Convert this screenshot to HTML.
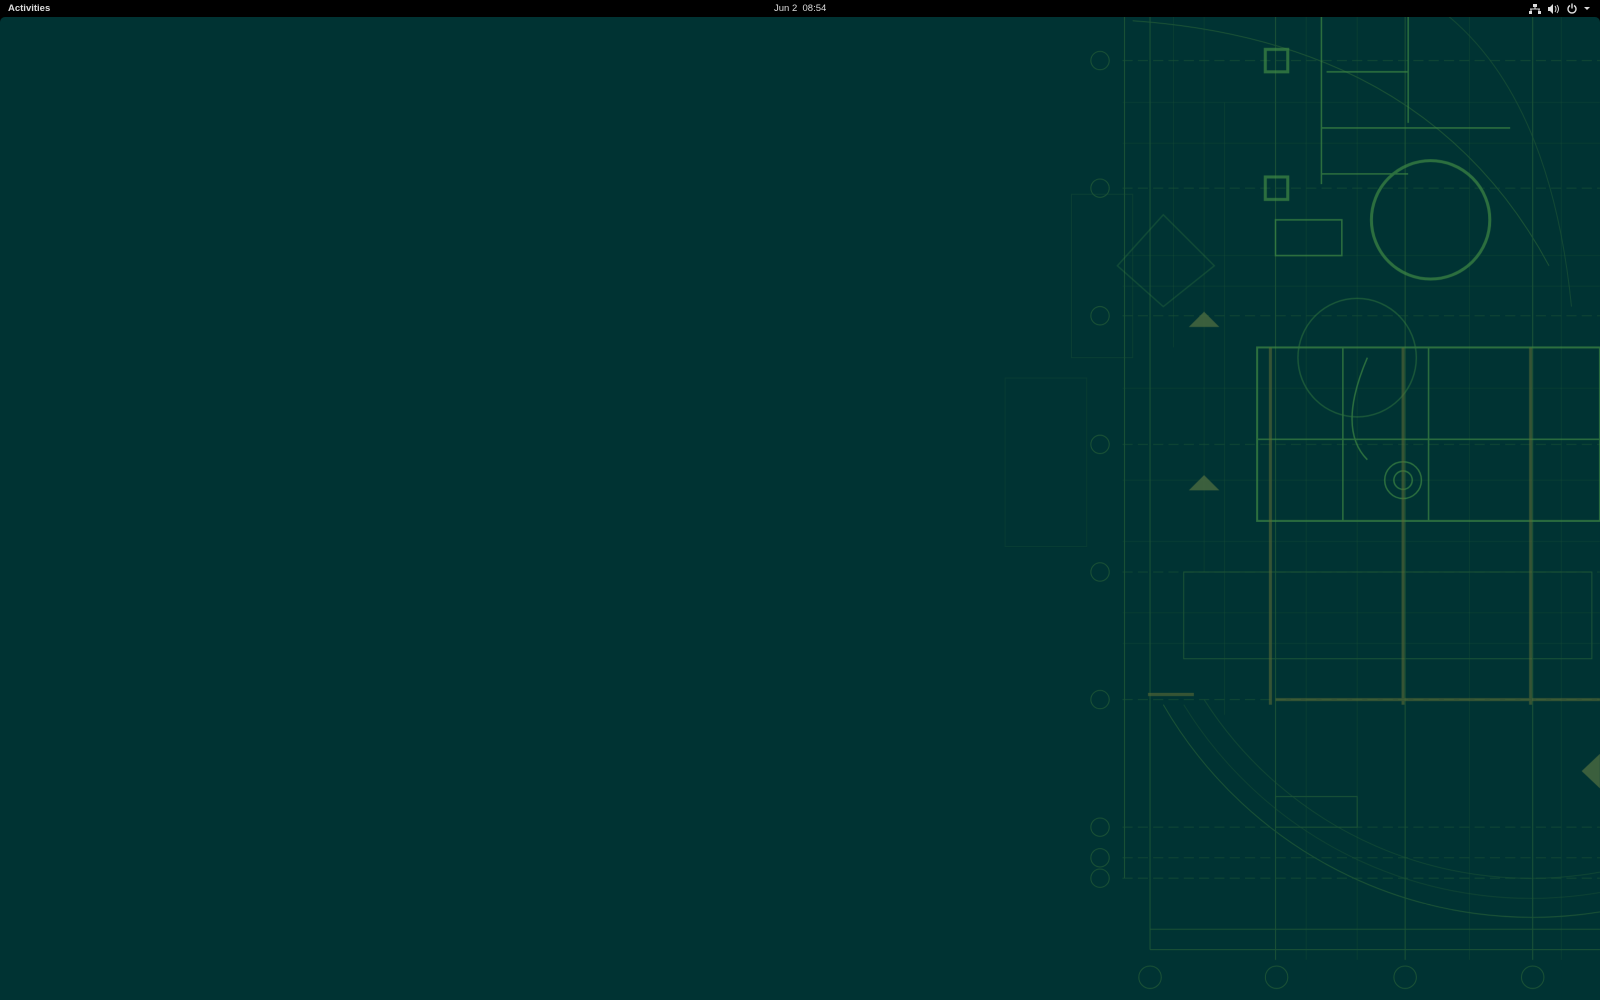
<!DOCTYPE html>
<html><head><style>
html,body{margin:0;padding:0;width:1600px;height:1000px;overflow:hidden;background:#000;}
#bar{position:absolute;left:0;top:0;width:1600px;height:17px;background:#000;color:#ddd;font-family:"Liberation Sans",sans-serif;font-size:9.5px;}
#desk{position:absolute;left:0;top:17px;width:1600px;height:983px;background:#003333;border-radius:5px 5px 0 0;overflow:hidden;}
svg{position:absolute;left:0;top:0;}
</style></head><body>
<div id="bar">
<span style="position:absolute;left:8px;top:3px;font-weight:bold;">Activities</span>
<span style="position:absolute;left:774px;top:3px;">Jun 2&nbsp; 08:54</span>
<svg width="1600" height="17" style="left:0;top:0">
<g fill="#ddd" stroke="#ddd">
<rect x="1533" y="4" width="4" height="3" stroke="none"/>
<path d="M1535 7v2M1530 9h10M1531 9v2M1539 9v2" fill="none" stroke-width="1"/>
<rect x="1529" y="11" width="3" height="3" stroke="none"/><rect x="1538" y="11" width="3" height="3" stroke="none"/>
<path d="M1548 7h2l3-3v10l-3-3h-2z" stroke="none"/>
<path d="M1555 6q2 3 0 6M1557 5q3 4 0 8" fill="none" stroke-width="1"/>
<path d="M1570 5.5a4 4 0 1 0 4 0" fill="none" stroke-width="1.4"/>
<path d="M1572 3.5v5" stroke-width="1.4"/>
<path d="M1584 7h6l-3 3z" stroke="none"/>
</g></svg>
</div>
<div id="desk">
<svg width="1600" height="983" viewBox="0 16.3 1568 963" preserveAspectRatio="none">
<g fill="none" stroke="#2f6a3a" stroke-width="1" opacity="0.6">
<path d="M1102 16V860M1127 16V930M1250 16V940M1377 16V940M1502 16V940"/>
<path d="M1100 59H1568M1100 184H1568M1100 309H1568M1100 435H1568M1100 560H1568M1100 685H1568M1100 810H1568M1100 840H1568M1100 860H1568" stroke-dasharray="10 5" opacity="0.6"/>
<path d="M1127 910H1568M1127 930H1568"/>
<circle cx="1078" cy="59" r="9"/><circle cx="1078" cy="184" r="9"/><circle cx="1078" cy="309" r="9"/><circle cx="1078" cy="435" r="9"/><circle cx="1078" cy="560" r="9"/><circle cx="1078" cy="685" r="9"/><circle cx="1078" cy="810" r="9"/><circle cx="1078" cy="840" r="9"/><circle cx="1078" cy="860" r="9"/>
<circle cx="1127" cy="957" r="11"/><circle cx="1251" cy="957" r="11"/><circle cx="1377" cy="957" r="11"/><circle cx="1502" cy="957" r="11"/>
<path d="M1140 690A418 418 0 0 0 1568 893"/>
<path d="M1180 685A380 380 0 0 0 1568 854" opacity="0.6"/>
<path d="M1160 690A400 400 0 0 0 1568 874" opacity="0.5"/>
<path d="M1110 20Q1400 40 1518 260"/>
<path d="M1420 16Q1520 100 1540 300" opacity="0.7"/>
<rect x="1160" y="560" width="400" height="85"/>
<rect x="1250" y="780" width="80" height="30"/>
<rect x="1050" y="190" width="60" height="160" opacity="0.4"/>
<rect x="985" y="370" width="80" height="165" opacity="0.3"/>
<path d="M1150 16V340M1180 16V560M1200 100V700M1280 16V940M1330 16V940M1440 16V940M1530 16V940" opacity="0.35"/>
<path d="M1100 100H1568M1100 140H1568M1100 250H1568M1100 280H1568M1100 380H1568M1100 470H1568M1100 530H1568M1100 600H1568M1100 630H1568" opacity="0.3"/>
</g>
<g fill="none" stroke="#3f8a45" stroke-width="1.5" opacity="0.7">
<circle cx="1402" cy="215" r="58" stroke-width="3"/>
<circle cx="1330" cy="350" r="58" opacity="0.6"/>
<rect x="1232" y="340" width="336" height="170" stroke-width="2"/>
<path d="M1232 430H1568M1316 340V510M1400 340V510"/>
<rect x="1240" y="48" width="22" height="22" stroke-width="3"/>
<rect x="1240" y="173" width="22" height="22" stroke-width="3"/>
<path d="M1295 16V180M1380 16V120M1295 125H1480M1295 170H1380M1300 70H1380"/>
<path d="M1250 215H1315V250H1250z"/>
<path d="M1140 210L1190 260L1140 300L1095 260z" opacity="0.4"/>
<circle cx="1375" cy="470" r="18"/><circle cx="1375" cy="470" r="9"/>
<path d="M1340 350Q1310 420 1340 450"/>
</g>
<g stroke="#5a6a35" stroke-width="3" opacity="0.6" fill="none">
<path d="M1250 685H1568M1125 680H1170M1375 340V690M1500 340V690M1245 340V690"/>
</g>
<path d="M1165 320L1180 305L1195 320z M1165 480L1180 465L1195 480z M1550 755L1568 738V772z" fill="#4a6a40" opacity="0.8"/>
</svg>
</div>
</body></html>
